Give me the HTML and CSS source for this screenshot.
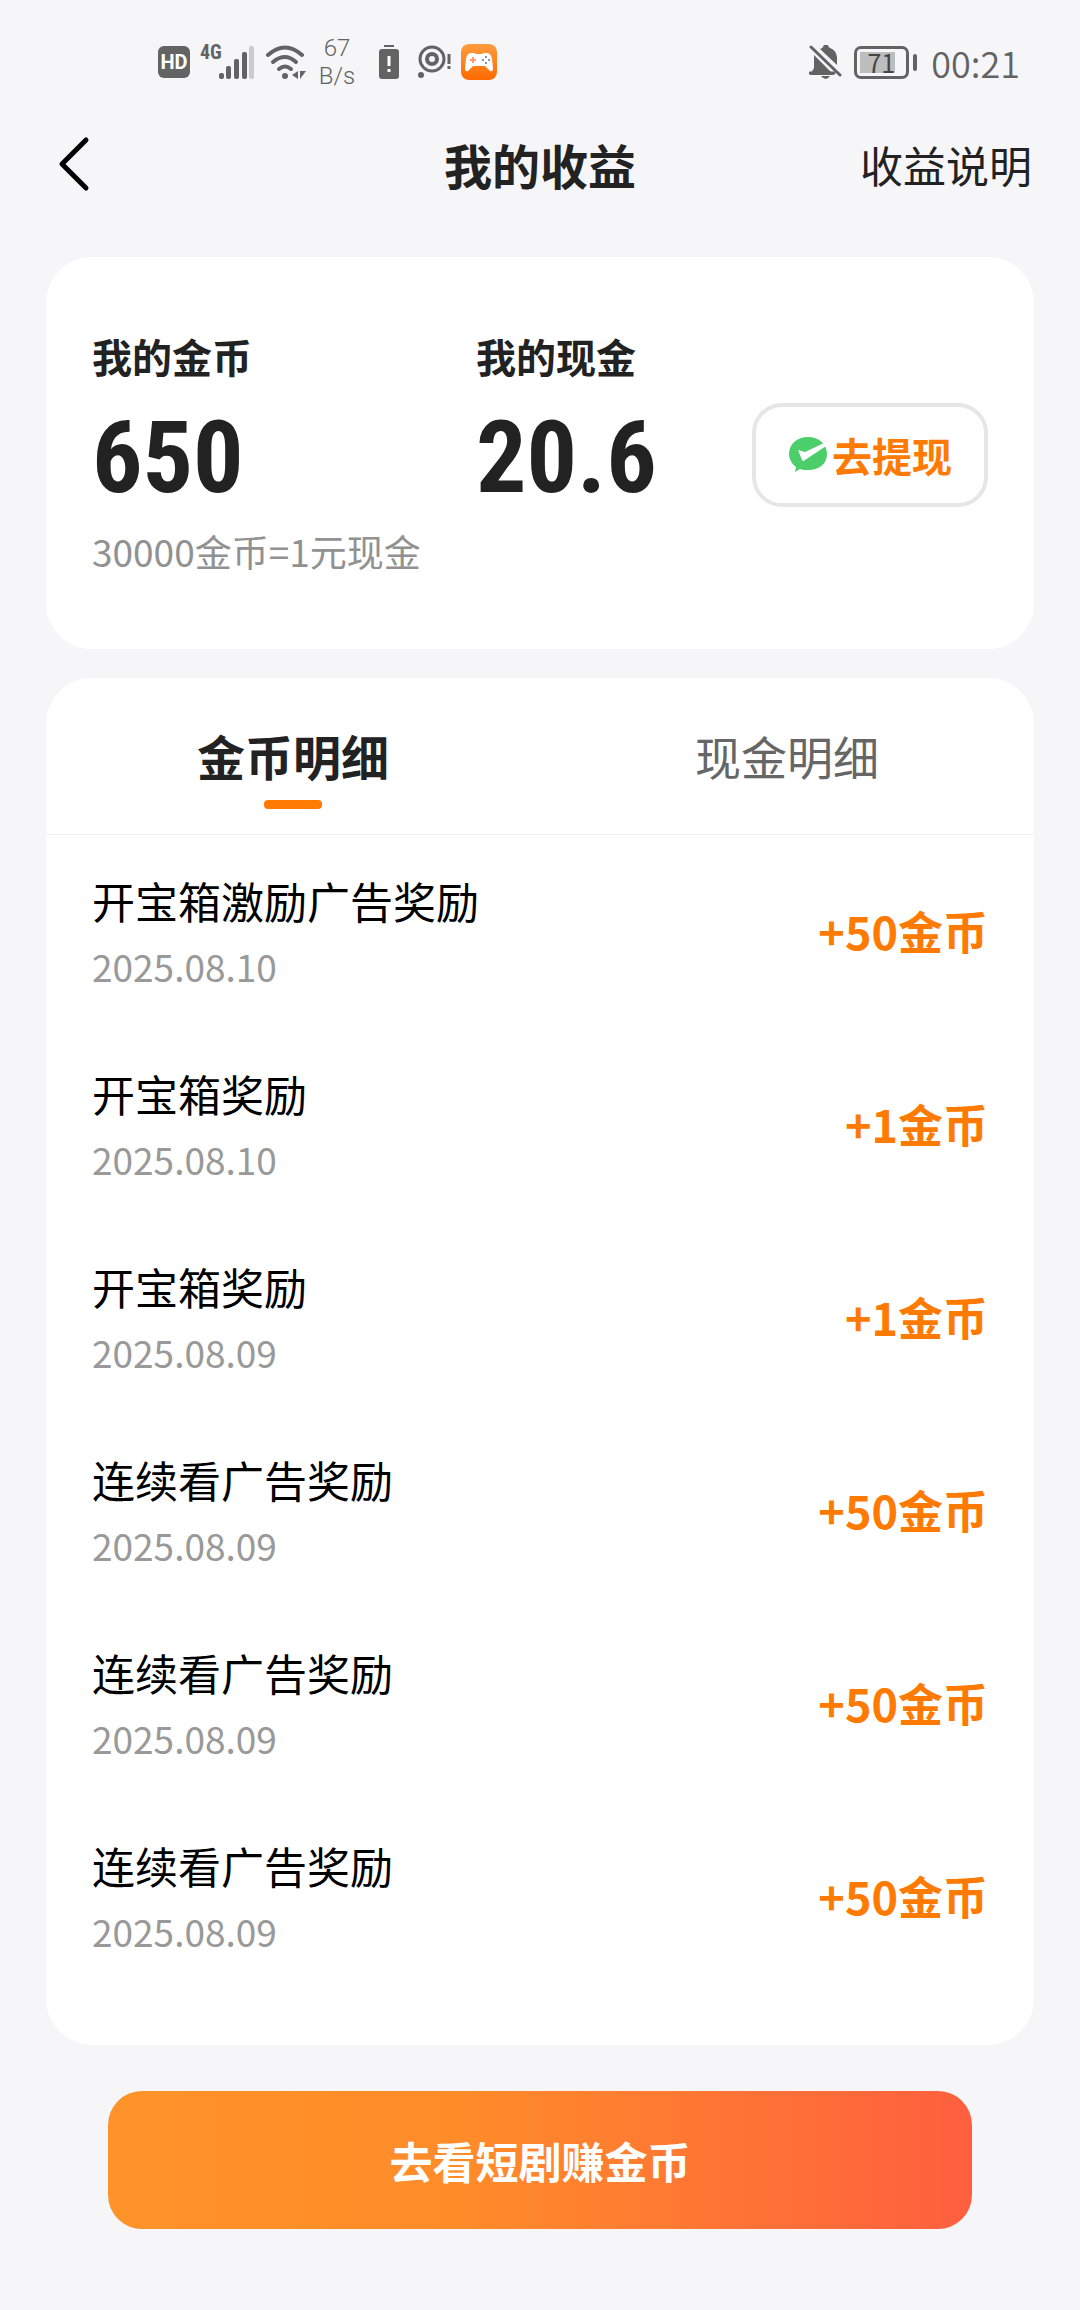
FILE: index.html
```html
<!DOCTYPE html>
<html lang="zh-CN">
<head>
<meta charset="utf-8">
<meta name="viewport" content="width=device-width, initial-scale=1">
<title>我的收益</title>
<link rel="stylesheet" href="styles.css">
</head>
<body>
<div class="screen">
  <div class="status">
    <div class="status-group">
      <span class="hd">HD</span>
      <span class="signal">
        <span class="signal-type">4G</span>
        <svg width="36" height="34" viewBox="0 0 36 34" aria-hidden="true">
          <g fill="#636363"><rect x="0" y="28" width="5" height="6" rx="2"/><rect x="7" y="21" width="5" height="13" rx="2"/><rect x="15" y="14" width="5" height="20" rx="2"/><rect x="23" y="7" width="5" height="27" rx="2"/></g>
          <rect x="30" y="1" width="5" height="33" rx="2" fill="#cbcbcc"/>
        </svg>
      </span>
      <svg width="42" height="36" viewBox="0 0 42 36" aria-hidden="true">
        <g fill="none" stroke="#636363" stroke-width="4" stroke-linecap="round"><path d="M3 11Q20-4 37 11"/><path d="M8 18Q20 8 31 18"/><path d="M14 25Q20 20 26 25"/></g>
        <circle cx="20" cy="32" r="3" fill="#636363"/>
        <path d="M33 27v8l-6-4zM35 27v8l6-8z" fill="#636363"/>
      </svg>
      <span class="speed">67<br>B/s</span>
      <svg class="alert" width="20" height="34" viewBox="0 0 20 34" aria-hidden="true">
        <rect x="5" y="0" width="10" height="2" fill="#636363"/><rect x="0" y="4" width="20" height="30" rx="3" fill="#636363"/>
        <path d="M10 11v10M10 24v3" stroke="#fff" stroke-width="3"/>
      </svg>
      <svg class="eye" width="34" height="34" viewBox="0 0 34 34" aria-hidden="true">
        <g fill="none" stroke="#636363"><circle cx="15" cy="14" r="12" stroke-width="3"/><circle cx="15" cy="14" r="5" stroke-width="4"/><path d="M32 9v10M32 21v3" stroke-width="3"/></g>
        <circle cx="4" cy="30" r="3" fill="#636363"/>
      </svg>
      <svg width="36" height="36" viewBox="0 0 36 36" aria-hidden="true">
        <defs><linearGradient id="game-bg" x2="0" y2="1"><stop stop-color="#ff9c3e"/><stop offset="1" stop-color="#ff6a00"/></linearGradient></defs>
        <rect width="36" height="36" rx="8" fill="url(#game-bg)"/>
        <path d="M10 9h3l2 1h6l2-1h3q4 0 5 6l1 9q0 4-3 3l-5-5H12l-5 5q-3 1-3-3l1-9q1-6 5-6z" fill="#fff"/>
        <path d="M12 13v6M9 16h6" stroke="#ff9b72" stroke-width="2"/>
        <g fill="#5b7281"><circle cx="25" cy="13" r="1"/><circle cx="25" cy="19" r="1"/><circle cx="22" cy="16" r="1"/><circle cx="28" cy="16" r="1"/></g>
      </svg>
    </div>
    <div class="status-group">
      <svg width="34" height="36" viewBox="0 0 34 36" aria-hidden="true">
        <path d="M5 11L25 31H1l4-7zM11 5q3-1 4-4h4q0 2 2 3 6 2 7 9v8z" fill="#636363"/>
        <path d="M2 3L31 31" stroke="#636363" stroke-width="3" stroke-linecap="round"/>
        <path d="M12 32h9q-4 6-9 0z" fill="#636363"/><path d="M1 29h24" stroke="#636363" stroke-width="3" stroke-linecap="round"/>
      </svg>
      <span class="battery"><span class="battery-level">71</span></span>
      <time class="clock">00:21</time>
    </div>
  </div>

  <header class="header">
    <button class="back" type="button" aria-label="返回">
      <svg width="32" height="56" viewBox="0 0 32 56" aria-hidden="true"><path d="M28 4L4 28l24 24" fill="none" stroke="#000" stroke-width="5" stroke-linecap="round" stroke-linejoin="round"/></svg>
    </button>
    <h1 class="title">我的收益</h1>
    <a class="help" href="#">收益说明</a>
  </header>

  <main class="main">
    <section class="card balance">
      <div>
        <h2 class="label">我的金币</h2>
        <p class="number">650</p>
        <p class="rate">30000金币=1元现金</p>
      </div>
      <div>
        <h2 class="label">我的现金</h2>
        <p class="number">20.6</p>
      </div>
      <button class="withdraw" type="button">
        <svg width="40" height="38" viewBox="0 0 40 38" aria-hidden="true">
          <path d="M20 1c11 0 19 7 19 17s-8 16-19 16c-3 0-6 0-8-1l-5 3 1-5C4 28 1 23 1 18 1 8 9 1 20 1z" fill="#4ccf6b"/>
          <path d="M10 14l4 10q1 2 3 0L38 10l-2-3-19 9z" fill="#fff"/>
        </svg>去提现
      </button>
    </section>

    <section class="card">
      <div class="tabs" role="tablist">
        <button class="tab active" type="button" role="tab" aria-selected="true">金币明细</button>
        <button class="tab" type="button" role="tab" aria-selected="false">现金明细</button>
      </div>
      <ul class="records">
        <li class="record"><div><p class="name">开宝箱激励广告奖励</p><time class="date">2025.08.10</time></div><strong class="amount">+50金币</strong></li>
        <li class="record"><div><p class="name">开宝箱奖励</p><time class="date">2025.08.10</time></div><strong class="amount">+1金币</strong></li>
        <li class="record"><div><p class="name">开宝箱奖励</p><time class="date">2025.08.09</time></div><strong class="amount">+1金币</strong></li>
        <li class="record"><div><p class="name">连续看广告奖励</p><time class="date">2025.08.09</time></div><strong class="amount">+50金币</strong></li>
        <li class="record"><div><p class="name">连续看广告奖励</p><time class="date">2025.08.09</time></div><strong class="amount">+50金币</strong></li>
        <li class="record"><div><p class="name">连续看广告奖励</p><time class="date">2025.08.09</time></div><strong class="amount">+50金币</strong></li>
      </ul>
    </section>

    <button class="earn" type="button">去看短剧赚金币</button>
  </main>
</div>
</body>
</html>
```
FILE: styles.css
```css
* { box-sizing: border-box; margin: 0; padding: 0; }
body {
  background: #f6f6f8;
  color: #222;
  font-family: "Noto Sans CJK SC", "Noto Sans", sans-serif;
}
button { border: 0; background: none; color: inherit; font: inherit; cursor: pointer; }
svg { display: block; flex: none; }
.screen { min-height: 100vh; }

/* system status bar */
.status {
  display: flex;
  justify-content: space-between;
  height: 124px;
  padding: 0 60px 0 158px;
  color: #636363;
}
.status-group { display: flex; align-items: center; gap: 10px; }
.hd {
  width: 32px;
  border-radius: 6px;
  background: #636363;
  color: #fff;
  font: bold 20px/32px Roboto, sans-serif;
  text-align: center;
}
.signal { display: flex; align-items: flex-start; }
.signal-type { width: 19px; font: bold 20px/14px "Roboto Condensed", Roboto, sans-serif; }
.speed { width: 40px; font: 300 24px/28px Roboto, sans-serif; text-align: center; }
.alert { margin-left: 12px; }
.eye { margin-left: 8px; }
.battery {
  position: relative;
  width: 55px;
  height: 33px;
  margin-left: 1px;
  padding: 3px;
  border: 3px solid #636363;
  border-radius: 7px;
}
.battery::after {
  content: "";
  position: absolute;
  top: 5px;
  right: -11px;
  width: 4px;
  height: 17px;
  border-radius: 2px;
  background: #636363;
}
.battery-level {
  display: block;
  width: 35px;
  background: #bdbdbd;
  color: #444;
  font-size: 25px;
  line-height: 21px;
  text-align: right;
}
.clock { margin-left: 12px; font-size: 36px; font-weight: 350; line-height: 40px; }

/* page header */
.header {
  display: grid;
  grid-template-columns: 1fr auto 1fr;
  align-items: center;
  height: 80px;
  padding: 0 48px;
}
.back { justify-self: start; padding: 0 10px; }
.title { font-size: 48px; font-weight: 700; line-height: 64px; }
.help { justify-self: end; color: #222; font-size: 43px; line-height: 64px; text-decoration: none; }

.main { display: flex; flex-direction: column; gap: 29px; padding: 53px 46px 80px; }
.card { border-radius: 46px; background: #fff; }

/* balances */
.balance {
  display: grid;
  grid-template-columns: 384px 1fr auto;
  padding: 69px 46px 65px;
}
.label { font-size: 40px; font-weight: 700; line-height: 60px; }
.number {
  padding-top: 12px;
  font-family: "Roboto Condensed", Roboto, sans-serif;
  font-size: 100px;
  font-weight: 700;
  line-height: 120px;
}
.rate { color: #919191; font-size: 37px; line-height: 66px; }
.withdraw {
  display: flex;
  align-items: center;
  justify-content: center;
  align-self: center;
  gap: 4px;
  width: 236px;
  height: 104px;
  border: 4px solid #e6e6e6;
  border-radius: 30px;
  color: #ff7a00;
  font-size: 40px;
  font-weight: 700;
}

/* coin and cash records */
.tabs { display: grid; grid-template-columns: 1fr 1fr; height: 157px; border-bottom: 1px solid #efefef; }
.tab {
  position: relative;
  padding: 0 0 2px;
  color: #666;
  font-size: 46px;
}
.tab.active { color: #222; font-size: 48px; font-weight: 700; }
.tab.active::after {
  content: "";
  position: absolute;
  bottom: 25px;
  left: calc(50% - 29px);
  width: 58px;
  height: 9px;
  border-radius: 4px;
  background: #ff7a00;
}
.records { padding: 0 46px 52px; list-style: none; }
.record {
  display: flex;
  align-items: center;
  justify-content: space-between;
  padding: 35px 0 36px;
}
.name { margin-bottom: 10px; color: #000; font-size: 43px; line-height: 60px; }
.date { display: block; color: #999; font-size: 37px; line-height: 52px; }
.amount { color: #ff7a00; font-size: 45px; font-weight: 700; line-height: 60px; }

.earn {
  height: 138px;
  margin: 17px 62px 0;
  border-radius: 34px;
  background: linear-gradient(90deg, #ff9229, #ff8c29 40%, #ff5f3f);
  color: #fff;
  font-size: 43px;
  font-weight: 700;
}
```
